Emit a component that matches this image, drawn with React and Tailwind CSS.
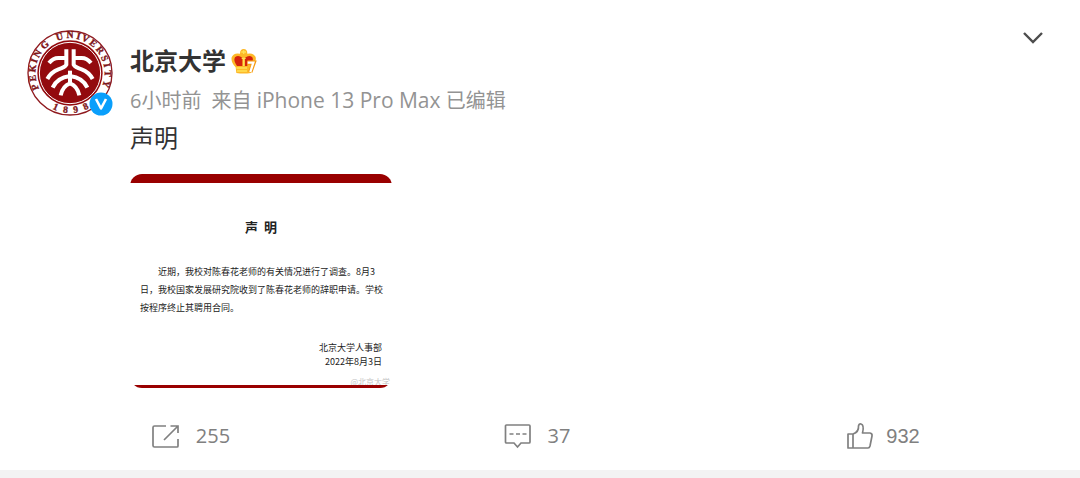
import React from 'react'

const ringLetters = [
  ['P', -112], ['E', -98], ['K', -83], ['I', -71], ['N', -59], ['G', -42],
  ['U', -16], ['N', 0], ['I', 13], ['V', 24], ['E', 38], ['R', 53], ['S', 67], ['I', 78], ['T', 91], ['Y', 107],
]

const yearDigits = [['1', 23], ['8', 7], ['9', -9], ['8', -25]]

function Seal() {
  return (
    <svg viewBox="0 0 258 258" className="size-[86px]" role="img" aria-label="Peking University">
      <circle cx="129" cy="129" r="126" fill="#fff" stroke="#8f1a1f" strokeWidth="4" />
      <circle cx="129" cy="129" r="98" fill="#930a0e" />
      <circle cx="129" cy="129" r="92" fill="none" stroke="#fff" strokeWidth="3" />
      <g fill="#7d1418" stroke="#7d1418" strokeWidth="1" fontFamily="'Liberation Serif', serif" fontWeight="700" fontSize="29" textAnchor="middle">
        {ringLetters.map(([ch, deg]) => (
          <text key={deg} x="129" y="25" transform={`rotate(${deg} 129 129)`}>{ch}</text>
        ))}
        {yearDigits.map(([ch, deg]) => (
          <text key={deg} x="129" y="249" transform={`rotate(${deg} 129 129)`}>{ch}</text>
        ))}
      </g>
      <g fill="none" stroke="#fff" strokeWidth="12">
        <path d="M66 99 Q78 84 94 84 H118 M118 58 V104 Q114 112 94 118 Q72 126 61 147" />
        <path d="M192 99 Q180 84 164 84 H140 M140 58 V104 Q144 112 164 118 Q186 126 197 147" />
        <path d="M129 122 V160" />
        <path d="M77 173 Q90 143 129 138 Q168 143 181 173" />
        <path d="M101 196 Q107 168 129 160 Q151 168 157 196" />
      </g>
    </svg>
  )
}

function Verified() {
  return (
    <svg viewBox="0 0 24 24" className="absolute right-0 bottom-0 size-6" aria-hidden="true">
      <circle cx="12" cy="12" r="11.5" fill="#0a9ffb" />
      <path d="M7 7 12 16.5 17 7" fill="none" stroke="#fff" strokeWidth="2.6" strokeLinejoin="round" />
    </svg>
  )
}

function Crown() {
  return (
    <svg viewBox="0 0 78 78" className="size-[26px]" aria-hidden="true">
      <path d="M14 58 Q-1 42 2 28 Q8 13 27 17 Q27 3 38 3 Q49 3 49 17 Q68 13 74 28 Q77 42 62 58 L60 75 Q38 78 16 75Z" fill="#fdb827" />
      <path d="M18 54 Q6 38 12 28 Q21 20 34 29 V54Z" fill="#d5230c" />
      <path d="M42 54 V29 Q55 20 64 28 Q67 33 65 38 H49 V54Z" fill="#d5230c" />
      <path d="M31 12 H45 M38 7 V18 M32 31 H44 M38 32 V54" stroke="#ffe257" strokeWidth="4" />
      <path d="M16 60 H48 M18 69 H48" stroke="#ffe257" strokeWidth="4" />
      <path d="M50 44 H68 L58 72" fill="none" stroke="#f59a12" strokeWidth="13" />
      <path d="M50 44 H67 L58 72" fill="none" stroke="#fff" strokeWidth="7" />
    </svg>
  )
}

function Notice() {
  return (
    <div className="relative w-[262px] overflow-hidden rounded-xl bg-white font-['Noto_Sans_CJK_SC',sans-serif] text-[9px] text-[#222]">
      <div className="h-[9px] bg-[#990000]" />
      <div className="h-[202px] px-[10px] pt-9">
        <h2 className="text-center text-[13px] leading-4 font-bold whitespace-pre">声  明</h2>
        <p className="mt-7 indent-[18px] leading-[18px] whitespace-nowrap">
          近期，我校对陈春花老师的有关情况进行了调查。8月3
        </p>
        <p className="leading-[18px] whitespace-nowrap">日，我校国家发展研究院收到了陈春花老师的辞职申请。学校</p>
        <p className="leading-[18px] whitespace-nowrap">按程序终止其聘用合同。</p>
        <p className="mt-6 text-right leading-[14px]">北京大学人事部<br />2022年8月3日</p>
      </div>
      <span className="absolute right-[2px] bottom-[2px] text-[8px] leading-[9px] text-[#c4c4c4]">@北京大学</span>
      <div className="relative h-[3px] bg-[#990000]" />
    </div>
  )
}

function ShareIcon() {
  return (
    <svg viewBox="0 0 28 26" className="h-[26px] w-7" fill="none" stroke="#808080" strokeWidth="1.7" aria-hidden="true">
      <path d="M14 3H2.5Q1 3 1 4.5V22.5Q1 24 2.5 24H25Q26 24 26 23V16M12 17 26 3M18.5 3H26V10" />
    </svg>
  )
}

function CommentIcon() {
  return (
    <svg viewBox="0 0 28 26" className="h-[26px] w-7" fill="none" stroke="#808080" strokeWidth="1.7" aria-hidden="true">
      <path d="M2.5 2H25Q26 2 26 3V19Q26 20 25 20H17L13.5 24 10 20H2.5Q1.5 20 1.5 19V3Q1.5 2 2.5 2Z" />
      <path d="M5.5 11H9.5M12 11H16M18.5 11H22.5" />
    </svg>
  )
}

function LikeIcon() {
  return (
    <svg viewBox="0 0 28 28" className="size-7" fill="none" stroke="#808080" strokeWidth="1.7" strokeLinejoin="round" aria-hidden="true">
      <path d="M2 12H7V26H2ZM7 12Q13 10 12.5 4Q13 1.5 15 2Q18.5 3 16.5 11H24Q26.5 11.5 26 14L24 24Q23.5 26 22 26H7" />
    </svg>
  )
}

export default function App() {
  return (
    <main className="bg-[#f3f3f3] pb-2">
      <article className="bg-white pt-[30px] pb-[18px] font-['Open_Sans','Noto_Sans_CJK_SC',sans-serif]">
        <div className="flex items-start pr-9 pl-[27px]">
          <a href="#profile" className="relative shrink-0"><Seal /><Verified /></a>
          <div className="ml-[17px] flex-1 pt-4">
            <header className="flex h-[30px] items-center gap-[5px]">
              <a href="#profile" className="text-2xl leading-[30px] font-bold text-[#333]">北京大学</a>
              <Crown />
            </header>
            <p className="mt-2 flex gap-[10px] text-xl leading-[34px] text-[#939393]">
              <time>6小时前</time>
              <span>来自 <span className="text-[21px] leading-none">iPhone 13 Pro Max</span> 已编辑</span>
            </p>
            <p className="mb-4 text-2xl leading-10 text-[#333]">声明</p>
            <Notice />
          </div>
          <button type="button" aria-label="更多" className="-ml-5">
            <svg viewBox="0 0 22 16" className="h-4 w-[22px]" fill="none" stroke="#4d4d4d" strokeWidth="2.4" aria-hidden="true">
              <path d="M2 3 11 12 20 3" />
            </svg>
          </button>
        </div>
        <footer className="mt-8 grid grid-cols-3 items-center pr-6 pl-[18px] text-xl leading-8 text-[#808080]">
          <button type="button" className="flex items-center justify-center gap-4"><ShareIcon />255</button>
          <button type="button" className="flex items-center justify-center gap-4"><CommentIcon />37</button>
          <button type="button" className="flex items-center justify-center gap-3 font-['Liberation_Sans',sans-serif]"><LikeIcon />932</button>
        </footer>
      </article>
    </main>
  )
}
